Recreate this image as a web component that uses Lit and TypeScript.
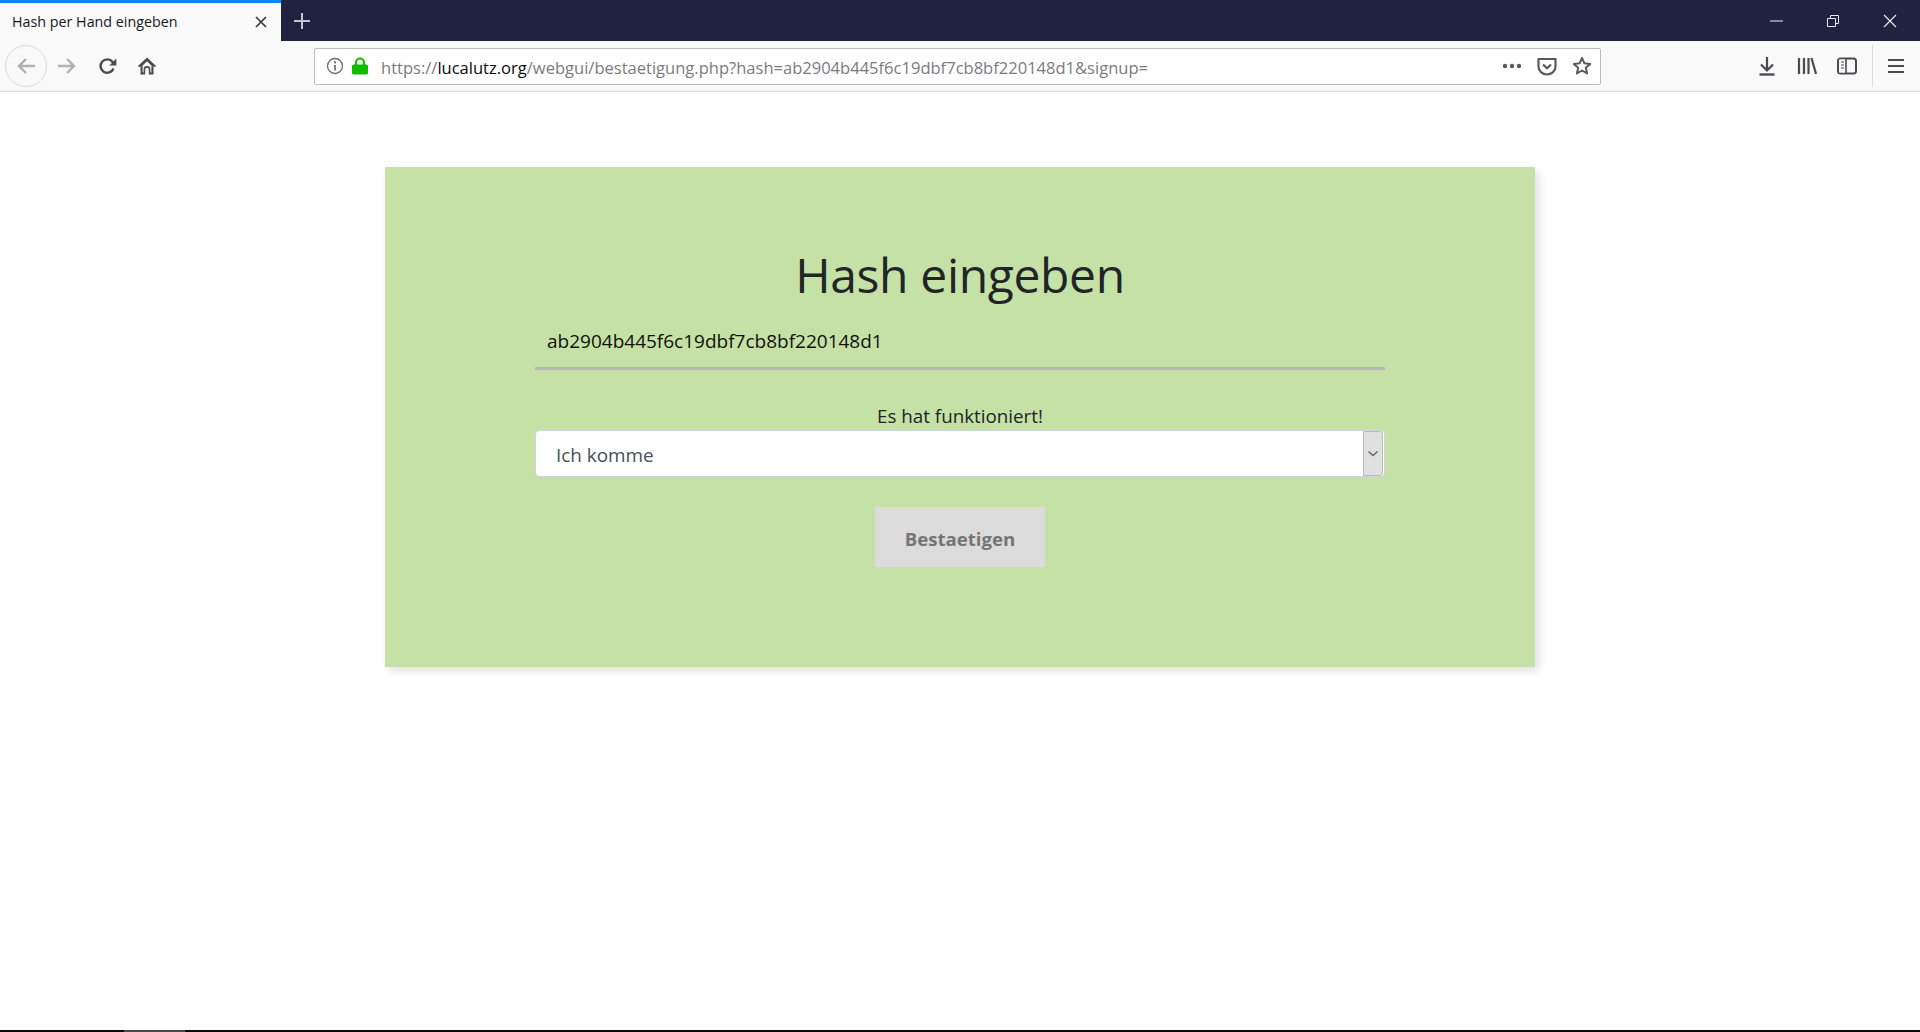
import { LitElement, html, css, svg } from "lit";
import { customElement } from "lit/decorators.js";

const ui = (w: number, h: number, body: unknown) =>
  html`<svg width=${w} height=${h} viewBox="0 0 ${w} ${h}" fill="none">${body}</svg>`;

@customElement("app-root")
export class AppRoot extends LitElement {
  static styles = css`
    :host {
      display: flex;
      flex-direction: column;
      height: 1032px;
      background: #fff;
      font-family: "Open Sans", "Noto Sans", sans-serif;
      color: #212529;
      overflow: hidden;
    }
    svg {
      display: block;
      flex: none;
    }

    .titlebar {
      display: flex;
      height: 41px;
      flex: none;
      background: #202340;
    }
    .tab {
      display: flex;
      align-items: center;
      justify-content: space-between;
      box-sizing: border-box;
      width: 281px;
      padding: 0 14px 0 12px;
      background: #f9f9fa;
      border-top: 3px solid #0a84ff;
      font-size: 14.3px;
      color: #18181a;
    }
    .tab span {
      padding-bottom: 2px;
    }
    .new-tab {
      display: flex;
      align-items: center;
      padding-left: 12px;
    }
    .window-controls {
      display: flex;
      align-items: center;
      gap: 44px;
      margin-left: auto;
      padding-right: 23px;
    }

    .toolbar {
      display: flex;
      align-items: center;
      box-sizing: border-box;
      height: 51px;
      flex: none;
      padding-left: 5px;
      background: #f9f9fa;
      border-bottom: 1px solid #d9d9db;
    }
    .back {
      display: flex;
      align-items: center;
      justify-content: center;
      box-sizing: border-box;
      width: 42px;
      height: 42px;
      border: 1px solid #dcdcde;
      border-radius: 50%;
    }
    .nav-icons {
      display: flex;
      align-items: center;
      gap: 20px;
      margin-left: 10px;
    }
    .nav-icons svg + svg {
      position: relative;
      left: 1px;
    }
    .urlbar {
      display: flex;
      align-items: center;
      box-sizing: border-box;
      width: 1287px;
      height: 37px;
      margin-left: 158px;
      padding: 0 8px 0 11px;
      background: #fff;
      border: 1px solid #bcbcbe;
      border-radius: 2px;
      font-size: 16.55px;
      color: #7b7b7f;
      white-space: nowrap;
    }
    .lock {
      margin-left: 8px;
    }
    .url {
      margin-left: 13px;
      padding-top: 2px;
    }
    .url b {
      font-weight: 400;
      color: #0c0c0d;
    }
    .url-actions {
      display: flex;
      align-items: center;
      gap: 15px;
      margin-left: auto;
    }
    .tools {
      display: flex;
      align-items: center;
      gap: 20px;
      margin-left: 156px;
    }
    .menu-sep {
      display: flex;
      align-items: center;
      height: 42px;
      margin-left: -5px;
      padding-left: 15px;
      border-left: 1px solid #dcdcde;
    }

    .page {
      display: flex;
      flex: 1;
      justify-content: center;
      padding-top: 75px;
    }
    .card {
      display: flex;
      flex-direction: column;
      align-items: center;
      box-sizing: border-box;
      width: 1150px;
      height: 500px;
      padding-top: 80px;
      background: #c5e1a5;
      box-shadow: 4px 4px 8px rgba(0, 0, 0, 0.12);
    }
    h1 {
      margin: 0;
      font-size: 48px;
      font-weight: 400;
      line-height: 56px;
      letter-spacing: -0.35px;
    }
    .hash {
      box-sizing: border-box;
      width: 850px;
      height: 59px;
      margin-top: 8px;
      padding: 15px 12px 0;
      border-bottom: 3px solid #b8b8b8;
      font-size: 19px;
      line-height: 30px;
      color: #111;
    }
    .status {
      margin-top: 33px;
      font-size: 18.8px;
      line-height: 27px;
    }
    .select {
      display: flex;
      align-items: center;
      box-sizing: border-box;
      width: 850px;
      height: 47px;
      padding: 0 1px 0 20px;
      background: #fff;
      border: 1px solid #d0d4d8;
      border-radius: 4px;
      font-size: 18.9px;
      color: #495057;
    }
    .select span {
      padding-top: 2px;
    }
    .arrow {
      display: flex;
      align-items: center;
      justify-content: center;
      box-sizing: border-box;
      width: 20px;
      height: 45px;
      margin-left: auto;
      background: #e0e0e0;
      border: 1px solid #bcbcbc;
      border-radius: 0 3px 3px 0;
    }
    .submit {
      display: flex;
      align-items: center;
      justify-content: center;
      box-sizing: border-box;
      width: 170px;
      height: 60px;
      margin-top: 30px;
      padding-top: 2px;
      background: #dbdbdb;
      font-size: 18.6px;
      font-weight: 700;
      color: #757575;
    }

    .taskbar {
      display: flex;
      height: 2px;
      flex: none;
      padding-left: 124px;
      background: #0a0a0a;
    }
    .taskbar div {
      width: 61px;
      background: #4a4a4a;
    }
  `;

  render() {
    return html`
      <div class="titlebar">
        <div class="tab">
          <span>Hash per Hand eingeben</span>
          ${ui(12, 12, svg`<path d="M1 1l10 10M11 1L1 11" stroke="#3a3a3c" stroke-width="1.7"/>`)}
        </div>
        <div class="new-tab">
          ${ui(18, 18, svg`<path d="M9 1v16M1 9h16" stroke="#c2c3cc" stroke-width="2"/>`)}
        </div>
        <div class="window-controls">
          ${ui(13, 2, svg`<path d="M0 1h13" stroke="#e8e8ee" stroke-width="1"/>`)}
          ${ui(12, 12, svg`<path d="M.5 3.5h8v8h-8zM3.5 3V.5h8v8H9" stroke="#e8e8ee"/>`)}
          ${ui(14, 14, svg`<path d="M1 1l12 12M13 1L1 13" stroke="#f0f0f4" stroke-width="1.1"/>`)}
        </div>
      </div>

      <div class="toolbar">
        <div class="back">
          ${ui(20, 18, svg`<path d="M19 9H3M10 2L3 9l7 7" stroke="#b1b1b3" stroke-width="2.4"/>`)}
        </div>
        <div class="nav-icons">
          ${ui(20, 18, svg`<path d="M1 9h16M10 2l7 7-7 7" stroke="#b1b1b3" stroke-width="2.4"/>`)}
          ${ui(19, 19, svg`<path d="M15.5 11.5A6.7 6.7 0 1 1 14.6 5L16 6.5" stroke="#4a4a4f" stroke-width="2.4"/><path d="M18.4 1.5v7h-7z" fill="#4a4a4f"/>`)}
          ${ui(20, 20, svg`<path d="M10 1.5L1 10l1.2 1.2L3.5 10v8.5h4.7v-5a1.8 1.8 0 0 1 3.6 0v5h4.7V10l1.3 1.2L19 10z" fill="#4a4a4f"/><path d="M5.6 9.5L10 5.2l4.4 4.3v7h-1v-3a3.4 3.4 0 0 0-6.8 0v3h-1z" fill="#f9f9fa"/>`)}
        </div>
        <div class="urlbar">
          ${ui(18, 18, svg`<circle cx="9" cy="9" r="7.5" stroke="#6a6a6e" stroke-width="1.3"/><path d="M9 8v5.5" stroke="#6a6a6e" stroke-width="1.7"/><circle cx="9" cy="5.4" r="1.1" fill="#6a6a6e"/>`)}
          <div class="lock">
            ${ui(16, 18, svg`<path d="M4 8V5.5a4 4 0 0 1 8 0V8" stroke="#12bc00" stroke-width="2.2"/><rect y="7.5" width="16" height="10" rx="1.5" fill="#12bc00"/>`)}
          </div>
          <span class="url">https://<b>lucalutz.org</b>/webgui/bestaetigung.php?hash=ab2904b445f6c19dbf7cb8bf220148d1&amp;signup=</span>
          <div class="url-actions">
            ${ui(20, 6, svg`<circle cx="3" cy="3" r="2.2" fill="#5a5a5e"/><circle cx="10" cy="3" r="2.2" fill="#5a5a5e"/><circle cx="17" cy="3" r="2.2" fill="#5a5a5e"/>`)}
            ${ui(20, 19, svg`<path d="M1.5 2h17v7.5a8.5 8 0 0 1-17 0z" stroke="#5a5a5e" stroke-width="2.2" stroke-linejoin="round"/><path d="M6 7.5l4 3.8 4-3.8" stroke="#5a5a5e" stroke-width="2.2"/>`)}
            ${ui(20, 20, svg`<path d="M10 2l2.4 5.3 5.8.6-4.4 3.9 1.3 5.7-5.1-3-5.1 3 1.3-5.7-4.4-3.9 5.8-.6z" stroke="#5a5a5e" stroke-width="2" stroke-linejoin="round"/>`)}
          </div>
        </div>
        <div class="tools">
          ${ui(20, 20, svg`<path d="M10 1v13M4 8.5l6 6 6-6" stroke="#4a4a4f" stroke-width="2.2"/><path d="M2.5 18.5h15" stroke="#4a4a4f" stroke-width="2.4"/>`)}
          ${ui(20, 18, svg`<path d="M2 1v16M7 1v16M11.5 1v16" stroke="#4a4a4f" stroke-width="2.2"/><path d="M14.5 1l4.5 16" stroke="#4a4a4f" stroke-width="2.2"/>`)}
          ${ui(20, 18, svg`<rect x="1" y="1.5" width="18" height="15" rx="2.5" stroke="#4a4a4f" stroke-width="2"/><rect x="2" y="2.5" width="7" height="13" fill="#f9f9fa"/><path d="M9 2v14" stroke="#4a4a4f" stroke-width="1.6"/><path d="M4 5h3M4 8h3M4 11h3" stroke="#4a4a4f"/>`)}
          <div class="menu-sep">
            ${ui(16, 16, svg`<path d="M0 2h16M0 8h16M0 14h16" stroke="#4a4a4f" stroke-width="2.1"/>`)}
          </div>
        </div>
      </div>

      <div class="page">
        <div class="card">
          <h1>Hash eingeben</h1>
          <div class="hash">ab2904b445f6c19dbf7cb8bf220148d1</div>
          <div class="status">Es hat funktioniert!</div>
          <div class="select">
            <span>Ich komme</span>
            <div class="arrow">
              ${ui(12, 7, svg`<path d="M1.5 1.5L6 5.5l4.5-4" stroke="#646464" stroke-width="1.5"/>`)}
            </div>
          </div>
          <div class="submit">Bestaetigen</div>
        </div>
      </div>

      <div class="taskbar"><div></div></div>
    `;
  }
}
